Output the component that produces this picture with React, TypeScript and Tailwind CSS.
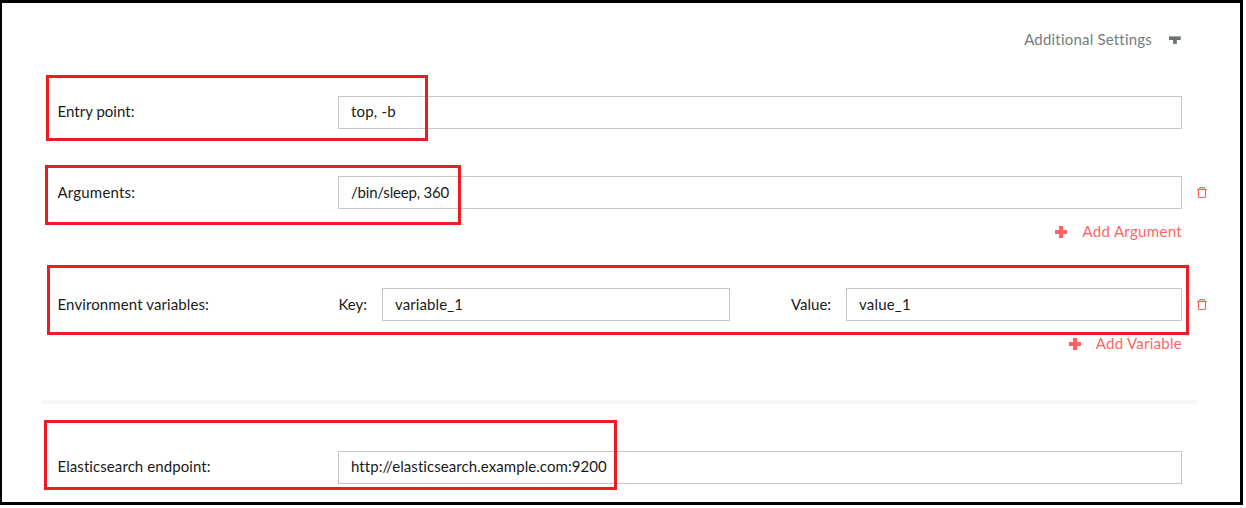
import type { ReactNode } from "react";

function TrashIcon() {
  return (
    <svg className="mb-px ml-[15px] h-[11px] w-[10px] shrink-0" viewBox="0 0 10 11" fill="none" stroke="#ff6464">
      <path d="M0 2.5h10" strokeWidth="1.2" />
      <path d="M2.7 2.5V1.3q0-.7.7-.7h3.2q.7 0 .7.7v1.2M1.5 2.8v6.9q0 .8.8.8h5.4q.8 0 .8-.8V2.8" strokeWidth="1.2" />
    </svg>
  );
}

function PlusIcon() {
  return (
    <svg className="mr-[15px] h-3 w-3" viewBox="0 0 12 12" fill="#ff6464">
      <path d="M4 0h4v4h4v4H8v4H4V8H0V4h4z" />
    </svg>
  );
}

function Field({ value, className }: { value: string; className: string }) {
  return (
    <div className={`flex h-[33px] shrink-0 items-center border border-[#c5c8c9] pl-3 ${className}`}>
      <span>{value}</span>
    </div>
  );
}

function Row({ label, labelClass, className, children }: { label: string; labelClass: string; className: string; children: ReactNode }) {
  return (
    <div className={`flex h-[33px] items-center ${className}`}>
      <div className={`w-[281px] shrink-0 pl-[0.5px] ${labelClass}`}>{label}</div>
      {children}
    </div>
  );
}

function AddLink({ label, className }: { label: string; className: string }) {
  return (
    <div className="flex h-[46px] w-[1125px] items-center justify-end text-[#ff6464]">
      <PlusIcon />
      <span className={`pb-0.5 ${className}`}>{label}</span>
    </div>
  );
}

export default function App() {
  return (
    <div className="h-[508px] w-[1246px] overflow-hidden bg-white">
      <div className="relative h-[505px] w-[1243px] border-y-[3px] border-r-[3px] border-l-2 border-black bg-white pl-[55px] font-['Lato',sans-serif] text-[15px] leading-5 whitespace-nowrap text-[#1a1a1a] [font-variant-ligatures:none]">
        <div className="flex h-[93px] w-[1125px] items-start justify-end pt-[26px] text-[#747c7c]">
          <span className="tracking-[0.2px]">Additional Settings</span>
          <svg className="mt-[7px] mr-px ml-[17px] h-2 w-3" viewBox="0 0 12 8">
            <path d="M0 0h12v4H8v4H4V4H0z" fill="#b4baba" />
            <path d="M0 .8h11.5V4H7.7v3.7H4.2V4H0z" fill="#6b7474" />
          </svg>
        </div>
        <Row label="Entry point:" labelClass="pb-1 tracking-[0.02px]" className="">
          <Field value="top, -b" className="w-[844px] pb-1 tracking-[0.2px]" />
        </Row>
        <Row label="Arguments:" labelClass="pb-0.5 tracking-[0.2px]" className="mt-[47px]">
          <Field value="/bin/sleep, 360" className="w-[844px] pb-0.5 tracking-[-0.2px]" />
          <TrashIcon />
        </Row>
        <AddLink label="Add Argument" className="tracking-[0.33px]" />
        <Row label="Environment variables:" labelClass="pb-0.5 tracking-[0.11px]" className="mt-[33px]">
          <div className="w-11 shrink-0 pb-0.5 pl-[0.5px]">Key:</div>
          <Field value="variable_1" className="w-[348px] pb-0.5 tracking-[0.1px]" />
          <div className="ml-[61px] w-[55px] shrink-0 pb-0.5">Value:</div>
          <Field value="value_1" className="w-[336px] pb-0.5 tracking-[0.2px]" />
          <TrashIcon />
        </Row>
        <AddLink label="Add Variable" className="tracking-[0.27px]" />
        <div className="mt-[33px] -ml-[15px] h-1 w-[1155px] bg-[#f7f7f9]" />
        <Row label="Elasticsearch endpoint:" labelClass="pb-1 tracking-[0.08px]" className="mt-[47px]">
          <Field value="http://elasticsearch.example.com:9200" className="w-[844px] pb-1 tracking-[0.07px]" />
        </Row>

        <div className="absolute top-[72px] left-[44px] h-[66px] w-[382px] border-3 border-[#ed1c24]" />
        <div className="absolute top-[162px] left-[43px] h-[60px] w-[416px] border-3 border-[#ed1c24]" />
        <div className="absolute top-[262px] left-[45px] h-[70px] w-[1142px] border-3 border-[#ed1c24]" />
        <div className="absolute top-[417px] left-[42px] h-[70px] w-[573px] border-3 border-[#ed1c24]" />
      </div>
    </div>
  );
}
